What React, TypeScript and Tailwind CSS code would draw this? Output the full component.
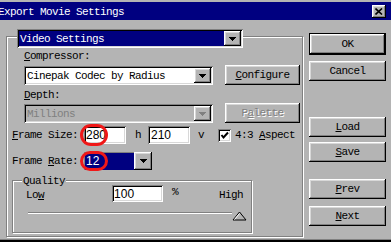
import React from "react";

// classic 3d edges
const raised =
  "shadow-[inset_-1px_-1px_0_#000,inset_1px_1px_0_#fff,inset_-2px_-2px_0_#808080,inset_2px_2px_0_#d8d8d8]";
const sunken =
  "shadow-[inset_1px_1px_0_#808080,inset_-1px_-1px_0_#fff,inset_2px_2px_0_#000,inset_-2px_-2px_0_#d8d8d8]";
const etched = "border border-[#808080] shadow-[inset_1px_1px_0_#fff,1px_1px_0_#fff]";
const sans = "font-['Liberation_Sans',Arial,sans-serif] text-[12px] tracking-normal";

function DownArrow({ disabled = false }: { disabled?: boolean }) {
  const c = disabled ? "#808080" : "#000";
  return (
    <svg width="7" height="4" shapeRendering="crispEdges">
      <rect x="0" y="0" width="7" height="1" fill={c} />
      <rect x="1" y="1" width="5" height="1" fill={c} />
      <rect x="2" y="2" width="3" height="1" fill={c} />
      <rect x="3" y="3" width="1" height="1" fill={c} />
    </svg>
  );
}

function ArrowButton({ w = 17, disabled = false }: { w?: number; disabled?: boolean }) {
  return (
    <div
      className={`${raised} bg-[#b4b4b4] h-full flex items-center justify-center shrink-0`}
      style={{ width: w }}
    >
      <DownArrow disabled={disabled} />
    </div>
  );
}

function Select({ text, disabled = false }: { text: string; disabled?: boolean }) {
  return (
    <div className={`${sunken} ${disabled ? "bg-[#b4b4b4]" : "bg-white"} w-[189px] h-[19px] p-[2px] flex mt-[1px]`}>
      <div className={`flex-1 flex items-center pl-[1px] ${disabled ? "text-[#808080]" : "text-black"}`}>
        {text}
      </div>
      <ArrowButton disabled={disabled} />
    </div>
  );
}

function Button({
  children,
  className = "",
  disabled = false,
}: {
  children: React.ReactNode;
  className?: string;
  disabled?: boolean;
}) {
  return (
    <div
      className={`${raised} bg-[#b4b4b4] h-[20px] flex items-center justify-center ${
        disabled ? "text-[#808080] [text-shadow:1px_1px_0_#fff]" : "text-black"
      } ${className}`}
    >
      {children}
    </div>
  );
}

export default function App() {
  return (
    <div className="w-[391px] h-[242px] overflow-hidden bg-[#b4b4b4] flex flex-col font-['Liberation_Mono',monospace] text-[11px] leading-[12px] tracking-[-0.6px] text-black whitespace-nowrap">
      {/* title bar */}
      <div className="mt-[2px] h-[18px] bg-[#000080] flex items-center justify-between shrink-0">
        <span className="text-white -ml-[2px] mt-[1px]">Export Movie Settings</span>
        <div className={`${raised} bg-[#b4b4b4] w-[14px] h-[13px] mr-[5px] flex items-center justify-center`}>
          <svg width="8" height="7" viewBox="0 0 8 7">
            <path d="M0.5 0.5 L7 6.5 M7 0.5 L0.5 6.5" stroke="#000" strokeWidth="1.6" />
          </svg>
        </div>
      </div>

      <div className="flex flex-1 min-h-0">
        {/* left: settings group */}
        <div className="w-[309px] pl-[6px] pt-[16px]">
          <div className={`${etched} w-[297px] h-[201px] flex flex-col`}>
            {/* Video Settings combo */}
            <div className={`${sunken} bg-white -mt-[8px] ml-[10px] w-[226px] h-[19px] p-[2px] flex`}>
              <div className="w-[205px] bg-[#000080] text-white flex items-center pl-[1px]">Video Settings</div>
              <ArrowButton />
            </div>

            <div className="ml-[17px] mt-[2px]">
              <u>C</u>ompressor:
            </div>
            <div className="ml-[17px] mt-[3px] flex items-start">
              <Select text="Cinepak Codec by Radius" />
              <Button className="ml-[12px] w-[75px]">
                <span>
                  <u>C</u>onfigure
                </span>
              </Button>
            </div>

            <div className="ml-[17px] mt-[4px]">
              <u>D</u>epth:
            </div>
            <div className="ml-[17px] mt-[2px] flex items-start">
              <Select text="Millions" disabled />
              <Button className="ml-[12px] w-[75px]" disabled>
                <span>
                  P<u>a</u>lette
                </span>
              </Button>
            </div>

            {/* frame size */}
            <div className="ml-[5px] mt-[3px] h-[18px] flex items-center">
              <span className="w-[66px] shrink-0">
                <u>F</u>rame Size:
              </span>
              <div className="relative ml-[6px]">
                <div className={`${sunken} ${sans} bg-white w-[42px] h-[18px] flex items-center pl-[2px]`}>280</div>
                <div className="absolute -left-[4px] -top-[2px] w-[28px] h-[22px] rounded-[11px] border-[3px] border-[#f01818]" />
              </div>
              <span className="ml-[9px]">h</span>
              <div className={`${sunken} ${sans} bg-white w-[42px] h-[18px] ml-[7px] flex items-center pl-[3px]`}>210</div>
              <span className="ml-[8px]">v</span>
              <div className={`${sunken} bg-white w-[13px] h-[13px] ml-[14px] flex items-center justify-center`}>
                <svg width="9" height="9" viewBox="0 0 9 9">
                  <path d="M1.5 4 L3.5 6.5 L8 1.5" stroke="#000" strokeWidth="2" fill="none" />
                </svg>
              </div>
              <span className="ml-[4px]">
                4:3 <u>A</u>spect
              </span>
            </div>

            {/* frame rate */}
            <div className="ml-[5px] mt-[8px] h-[18px] flex items-center">
              <span className="w-[66px] shrink-0">
                Frame <u>R</u>ate:
              </span>
              <div className="relative ml-[6px] h-[18px] flex">
                <div className={`${sans} w-[50px] h-full bg-[#000080] text-white flex items-center pl-[2px] shadow-[inset_1px_1px_0_#808080]`}>
                  12
                </div>
                <ArrowButton w={18} />
                <div className="absolute -left-[4px] -top-[1px] w-[28px] h-[20px] rounded-[10px] border-[3px] border-[#f01818]" />
              </div>
            </div>

            {/* quality */}
            <div className={`${etched} ml-[5px] mt-[10px] w-[240px] h-[53px] flex flex-col`}>
              <div className="-mt-[6px] ml-[9px] px-[1px] bg-[#b4b4b4] self-start">Quality</div>
              <div className="-mt-[2px] h-[17px] flex items-start">
                <span className="ml-[13px] mt-[4px]">
                  Lo<u>w</u>
                </span>
                <div className={`${sunken} ${sans} bg-white w-[51px] h-[17px] ml-[68px] flex items-center pl-[2px]`}>100</div>
                <span className="ml-[9px] mt-[1px]">%</span>
                <span className="ml-[41px] mt-[4px]">High</span>
              </div>
              <div className="ml-[15px] mt-[10px] flex items-start">
                <div className="w-[204px] h-[2px] border-t border-[#808080] border-b-white bg-white" />
                <svg width="15" height="10" viewBox="0 0 15 10" className="-mt-[1px]">
                  <polygon points="7.5,1 14,9 1,9" fill="#b4b4b4" stroke="#000" strokeWidth="1" />
                  <path d="M7.5 2.5 L2.5 8.5" stroke="#fff" strokeWidth="1" />
                </svg>
              </div>
            </div>
          </div>
        </div>

        {/* right: buttons */}
        <div className="w-[77px] pt-[13px] flex flex-col">
          <div className="border border-black h-[22px]">
            <Button className="h-full">OK</Button>
          </div>
          <Button className="mt-[6px]">Cancel</Button>
          <Button className="mt-[36px]">
            <span>
              <u>L</u>oad
            </span>
          </Button>
          <Button className="mt-[5px]">
            <span>
              <u>S</u>ave
            </span>
          </Button>
          <Button className="mt-[17px]">
            <span>
              <u>P</u>rev
            </span>
          </Button>
          <Button className="mt-[7px]">
            <span>
              <u>N</u>ext
            </span>
          </Button>
        </div>
      </div>

      <div className="h-[1px] bg-[#808080] shrink-0" />
      <div className="h-[2px] bg-black shrink-0" />
    </div>
  );
}
